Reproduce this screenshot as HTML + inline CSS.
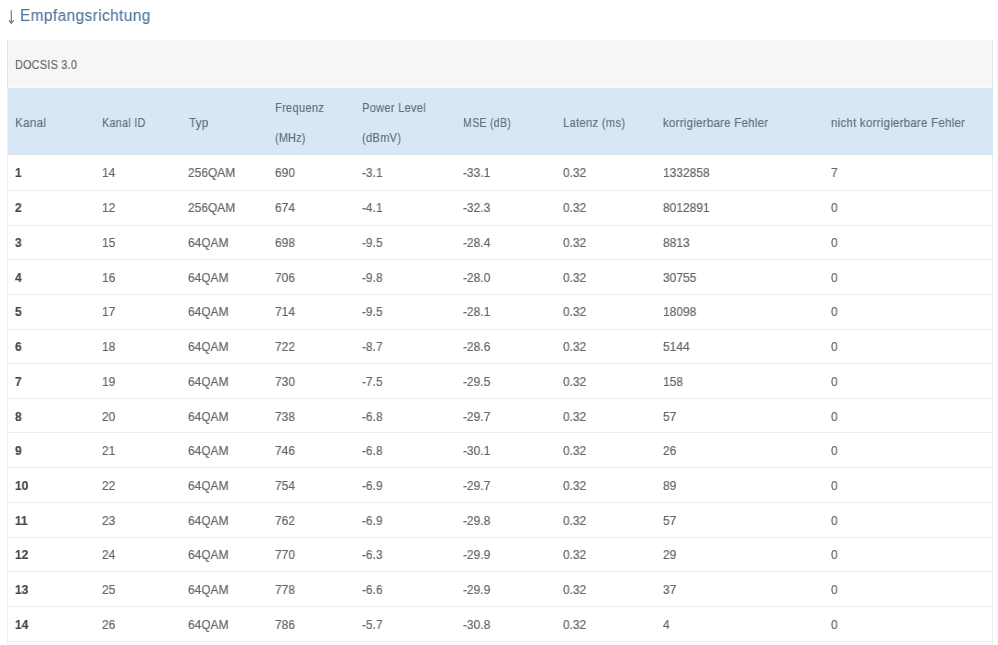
<!DOCTYPE html>
<html><head><meta charset="utf-8">
<style>
html,body{margin:0;padding:0;background:#fff;width:998px;height:645px;overflow:hidden;position:relative;}
body{font-family:"Liberation Sans",sans-serif;}
div,svg{position:absolute;}
.t{font-size:13px;line-height:16px;white-space:nowrap;transform:scaleX(0.92);transform-origin:0 0;will-change:transform;-webkit-text-stroke:0.2px currentColor;}
.h{color:#63717f;}
.d{color:#656565;}
.b{color:#474747;font-weight:bold;}
.ln{left:8px;width:984px;height:1px;background:#ececec;}
</style></head><body>

<svg style="left:0;top:0;" width="30" height="30" viewBox="0 0 30 30"><path d="M11.3 10.6 V23.2 M9.3 20.6 L11.3 23.4 L13.5 20.6" fill="none" stroke="#687a8b" stroke-width="1.15" stroke-linejoin="round" stroke-linecap="round"/></svg>
<div style="left:20px;top:6px;font-size:16px;letter-spacing:0.4px;line-height:20px;color:#4d7399;white-space:nowrap;transform:scaleX(0.966);transform-origin:0 0;will-change:transform;-webkit-text-stroke:0.1px currentColor;">Empfangsrichtung</div>
<div style="left:8px;top:40px;width:985px;height:46px;background:#f6f6f4;"></div>
<div style="left:8px;top:86px;width:985px;height:2px;background:#f9fbf7;"></div>
<div style="left:8px;top:88px;width:985px;height:67px;background:#d8e7f6;"></div>
<div style="left:8px;top:88px;width:985px;height:1px;background:#d9e2ec;"></div>
<div style="left:8px;top:154px;width:985px;height:1px;background:#d8e0e9;"></div>
<div style="left:7px;top:40px;width:1px;height:48px;background:#e4e4e4;"></div>
<div style="left:992px;top:40px;width:1px;height:48px;background:#e4e4e4;"></div>
<div style="left:7px;top:88px;width:1px;height:67px;background:#ecf1f5;"></div>
<div style="left:7px;top:155px;width:1px;height:490px;background:#efefef;"></div>
<div style="left:992px;top:155px;width:1px;height:490px;background:#efefef;"></div>
<div class="t" style="left:15px;top:57px;color:#686868;letter-spacing:0.3px;transform:scaleX(0.834);">DOCSIS 3.0</div>
<div class="t h" style="left:15px;top:115px; letter-spacing:0.3px;transform:scaleX(0.9);">Kanal</div>
<div class="t h" style="left:102px;top:115px; letter-spacing:0.3px;transform:scaleX(0.835);">Kanal ID</div>
<div class="t h" style="left:189px;top:115px; letter-spacing:0.3px;transform:scaleX(0.9);">Typ</div>
<div class="t h" style="left:275px;top:100px; letter-spacing:0.3px;transform:scaleX(0.857);">Frequenz</div>
<div class="t h" style="left:275px;top:130px; letter-spacing:0.3px;transform:scaleX(0.831);">(MHz)</div>
<div class="t h" style="left:362px;top:100px; letter-spacing:0.3px;transform:scaleX(0.855);">Power Level</div>
<div class="t h" style="left:362px;top:130px; letter-spacing:0.3px;transform:scaleX(0.855);">(dBmV)</div>
<div class="t h" style="left:463px;top:115px; letter-spacing:0.3px;transform:scaleX(0.818);">MSE (dB)</div>
<div class="t h" style="left:563px;top:115px; letter-spacing:0.3px;transform:scaleX(0.867);">Latenz (ms)</div>
<div class="t h" style="left:663px;top:115px; letter-spacing:0.3px;transform:scaleX(0.883);">korrigierbare Fehler</div>
<div class="t h" style="left:831px;top:115px; letter-spacing:0.3px;transform:scaleX(0.881);">nicht korrigierbare Fehler</div>
<div class="t b" style="left:15px;top:165px;">1</div>
<div class="t d" style="left:102px;top:165px;">14</div>
<div class="t d" style="left:188px;top:165px;">256QAM</div>
<div class="t d" style="left:275px;top:165px;">690</div>
<div class="t d" style="left:362px;top:165px;">-3.1</div>
<div class="t d" style="left:463px;top:165px;">-33.1</div>
<div class="t d" style="left:563px;top:165px;">0.32</div>
<div class="t d" style="left:663px;top:165px;">1332858</div>
<div class="t d" style="left:831px;top:165px;">7</div>
<div class="t b" style="left:15px;top:200px;">2</div>
<div class="t d" style="left:102px;top:200px;">12</div>
<div class="t d" style="left:188px;top:200px;">256QAM</div>
<div class="t d" style="left:275px;top:200px;">674</div>
<div class="t d" style="left:362px;top:200px;">-4.1</div>
<div class="t d" style="left:463px;top:200px;">-32.3</div>
<div class="t d" style="left:563px;top:200px;">0.32</div>
<div class="t d" style="left:663px;top:200px;">8012891</div>
<div class="t d" style="left:831px;top:200px;">0</div>
<div class="t b" style="left:15px;top:235px;">3</div>
<div class="t d" style="left:102px;top:235px;">15</div>
<div class="t d" style="left:188px;top:235px;">64QAM</div>
<div class="t d" style="left:275px;top:235px;">698</div>
<div class="t d" style="left:362px;top:235px;">-9.5</div>
<div class="t d" style="left:463px;top:235px;">-28.4</div>
<div class="t d" style="left:563px;top:235px;">0.32</div>
<div class="t d" style="left:663px;top:235px;">8813</div>
<div class="t d" style="left:831px;top:235px;">0</div>
<div class="t b" style="left:15px;top:270px;">4</div>
<div class="t d" style="left:102px;top:270px;">16</div>
<div class="t d" style="left:188px;top:270px;">64QAM</div>
<div class="t d" style="left:275px;top:270px;">706</div>
<div class="t d" style="left:362px;top:270px;">-9.8</div>
<div class="t d" style="left:463px;top:270px;">-28.0</div>
<div class="t d" style="left:563px;top:270px;">0.32</div>
<div class="t d" style="left:663px;top:270px;">30755</div>
<div class="t d" style="left:831px;top:270px;">0</div>
<div class="t b" style="left:15px;top:304px;">5</div>
<div class="t d" style="left:102px;top:304px;">17</div>
<div class="t d" style="left:188px;top:304px;">64QAM</div>
<div class="t d" style="left:275px;top:304px;">714</div>
<div class="t d" style="left:362px;top:304px;">-9.5</div>
<div class="t d" style="left:463px;top:304px;">-28.1</div>
<div class="t d" style="left:563px;top:304px;">0.32</div>
<div class="t d" style="left:663px;top:304px;">18098</div>
<div class="t d" style="left:831px;top:304px;">0</div>
<div class="t b" style="left:15px;top:339px;">6</div>
<div class="t d" style="left:102px;top:339px;">18</div>
<div class="t d" style="left:188px;top:339px;">64QAM</div>
<div class="t d" style="left:275px;top:339px;">722</div>
<div class="t d" style="left:362px;top:339px;">-8.7</div>
<div class="t d" style="left:463px;top:339px;">-28.6</div>
<div class="t d" style="left:563px;top:339px;">0.32</div>
<div class="t d" style="left:663px;top:339px;">5144</div>
<div class="t d" style="left:831px;top:339px;">0</div>
<div class="t b" style="left:15px;top:374px;">7</div>
<div class="t d" style="left:102px;top:374px;">19</div>
<div class="t d" style="left:188px;top:374px;">64QAM</div>
<div class="t d" style="left:275px;top:374px;">730</div>
<div class="t d" style="left:362px;top:374px;">-7.5</div>
<div class="t d" style="left:463px;top:374px;">-29.5</div>
<div class="t d" style="left:563px;top:374px;">0.32</div>
<div class="t d" style="left:663px;top:374px;">158</div>
<div class="t d" style="left:831px;top:374px;">0</div>
<div class="t b" style="left:15px;top:409px;">8</div>
<div class="t d" style="left:102px;top:409px;">20</div>
<div class="t d" style="left:188px;top:409px;">64QAM</div>
<div class="t d" style="left:275px;top:409px;">738</div>
<div class="t d" style="left:362px;top:409px;">-6.8</div>
<div class="t d" style="left:463px;top:409px;">-29.7</div>
<div class="t d" style="left:563px;top:409px;">0.32</div>
<div class="t d" style="left:663px;top:409px;">57</div>
<div class="t d" style="left:831px;top:409px;">0</div>
<div class="t b" style="left:15px;top:443px;">9</div>
<div class="t d" style="left:102px;top:443px;">21</div>
<div class="t d" style="left:188px;top:443px;">64QAM</div>
<div class="t d" style="left:275px;top:443px;">746</div>
<div class="t d" style="left:362px;top:443px;">-6.8</div>
<div class="t d" style="left:463px;top:443px;">-30.1</div>
<div class="t d" style="left:563px;top:443px;">0.32</div>
<div class="t d" style="left:663px;top:443px;">26</div>
<div class="t d" style="left:831px;top:443px;">0</div>
<div class="t b" style="left:15px;top:478px;">10</div>
<div class="t d" style="left:102px;top:478px;">22</div>
<div class="t d" style="left:188px;top:478px;">64QAM</div>
<div class="t d" style="left:275px;top:478px;">754</div>
<div class="t d" style="left:362px;top:478px;">-6.9</div>
<div class="t d" style="left:463px;top:478px;">-29.7</div>
<div class="t d" style="left:563px;top:478px;">0.32</div>
<div class="t d" style="left:663px;top:478px;">89</div>
<div class="t d" style="left:831px;top:478px;">0</div>
<div class="t b" style="left:15px;top:513px;">11</div>
<div class="t d" style="left:102px;top:513px;">23</div>
<div class="t d" style="left:188px;top:513px;">64QAM</div>
<div class="t d" style="left:275px;top:513px;">762</div>
<div class="t d" style="left:362px;top:513px;">-6.9</div>
<div class="t d" style="left:463px;top:513px;">-29.8</div>
<div class="t d" style="left:563px;top:513px;">0.32</div>
<div class="t d" style="left:663px;top:513px;">57</div>
<div class="t d" style="left:831px;top:513px;">0</div>
<div class="t b" style="left:15px;top:547px;">12</div>
<div class="t d" style="left:102px;top:547px;">24</div>
<div class="t d" style="left:188px;top:547px;">64QAM</div>
<div class="t d" style="left:275px;top:547px;">770</div>
<div class="t d" style="left:362px;top:547px;">-6.3</div>
<div class="t d" style="left:463px;top:547px;">-29.9</div>
<div class="t d" style="left:563px;top:547px;">0.32</div>
<div class="t d" style="left:663px;top:547px;">29</div>
<div class="t d" style="left:831px;top:547px;">0</div>
<div class="t b" style="left:15px;top:582px;">13</div>
<div class="t d" style="left:102px;top:582px;">25</div>
<div class="t d" style="left:188px;top:582px;">64QAM</div>
<div class="t d" style="left:275px;top:582px;">778</div>
<div class="t d" style="left:362px;top:582px;">-6.6</div>
<div class="t d" style="left:463px;top:582px;">-29.9</div>
<div class="t d" style="left:563px;top:582px;">0.32</div>
<div class="t d" style="left:663px;top:582px;">37</div>
<div class="t d" style="left:831px;top:582px;">0</div>
<div class="t b" style="left:15px;top:617px;">14</div>
<div class="t d" style="left:102px;top:617px;">26</div>
<div class="t d" style="left:188px;top:617px;">64QAM</div>
<div class="t d" style="left:275px;top:617px;">786</div>
<div class="t d" style="left:362px;top:617px;">-5.7</div>
<div class="t d" style="left:463px;top:617px;">-30.8</div>
<div class="t d" style="left:563px;top:617px;">0.32</div>
<div class="t d" style="left:663px;top:617px;">4</div>
<div class="t d" style="left:831px;top:617px;">0</div>
<div class="ln" style="top:190px;"></div>
<div class="ln" style="top:225px;"></div>
<div class="ln" style="top:259px;"></div>
<div class="ln" style="top:294px;"></div>
<div class="ln" style="top:329px;"></div>
<div class="ln" style="top:363px;"></div>
<div class="ln" style="top:398px;"></div>
<div class="ln" style="top:432px;"></div>
<div class="ln" style="top:467px;"></div>
<div class="ln" style="top:502px;"></div>
<div class="ln" style="top:537px;"></div>
<div class="ln" style="top:571px;"></div>
<div class="ln" style="top:606px;"></div>
<div class="ln" style="top:641px;"></div>
</body></html>
